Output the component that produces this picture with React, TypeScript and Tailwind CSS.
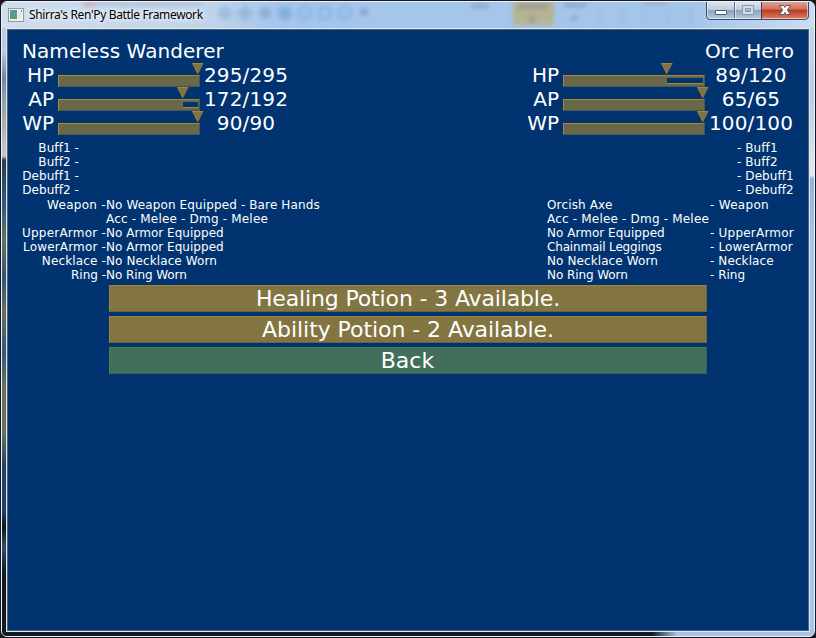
import React from "react";

type StatProps = { label: string; value: string; fill: number; left: number };

function Bar({ fill }: { fill: number }) {
  return (
    <div className="relative mt-3 h-3 w-[142px] shrink-0 border border-t-[#aa872f] border-l-[#aa872f] border-r-[#42575a] border-b-[#42575a] bg-[#69694a]">
      {fill < 138 && (
        <div
          className="absolute top-[2px] right-px h-[6px] border-b border-[#aa872f] bg-[#003370]"
          style={{ left: fill - 1 }}
        />
      )}
      <svg
        className="absolute -top-[13px] h-[12px] w-[12px]"
        style={{ left: fill - 7 }}
        viewBox="0 0 12 12"
      >
        <path d="M0 0H12L6 11.5Z" fill="#555e58" />
        <path d="M0 0H11L5.5 11Z" fill="#aa872f" />
        <path d="M1.2 1H10L5.8 9.8Z" fill="#80733f" />
      </svg>
    </div>
  );
}

function Stat({ label, value, fill, left }: StatProps) {
  return (
    <div className="flex h-6" style={{ marginLeft: left }}>
      <span className="w-[32px] text-right leading-6">{label}</span>
      <div className="ml-[4px]">
        <Bar fill={fill} />
      </div>
      <span className="w-[92px] text-center leading-6 tracking-[0.15px]">{value}</span>
    </div>
  );
}

const leftGear = [
  ["Weapon -", "No Weapon Equipped - Bare Hands", "tracking-[0.3px]", "tracking-[0.12px]"],
  ["", "Acc - Melee - Dmg - Melee", "", "tracking-[0.19px]"],
  ["UpperArmor -", "No Armor Equipped", "tracking-[0.22px]", "tracking-[0.03px]"],
  ["LowerArmor -", "No Armor Equipped", "tracking-[0.16px]", "tracking-[0.03px]"],
  ["Necklace -", "No Necklace Worn", "tracking-[0.15px]", "tracking-[0.1px]"],
  ["Ring -", "No Ring Worn", "", "tracking-[-0.08px]"],
];
const rightGear = [
  ["Orcish Axe", "- Weapon", "tracking-[0.15px]", "tracking-[0.3px]"],
  ["Acc - Melee - Dmg - Melee", "", "tracking-[0.19px]", ""],
  ["No Armor Equipped", "- UpperArmor", "tracking-[0.03px]", "tracking-[0.22px]"],
  ["Chainmail Leggings", "- LowerArmor", "tracking-[-0.17px]", "tracking-[0.16px]"],
  ["No Necklace Worn", "- Necklace", "tracking-[0.1px]", "tracking-[0.1px]"],
  ["No Ring Worn", "- Ring", "tracking-[-0.08px]", "tracking-normal"],
];
const buffs = ["Buff1", "Buff2", "Debuff1", "Debuff2"];

function Controls() {
  return (
    <svg className="absolute -top-[2px] right-[4px] h-[21px] w-[105px]" viewBox="0 0 105 21">
      <defs>
        <linearGradient id="glass" x1="0" y1="0" x2="0" y2="1">
          <stop offset="0" stopColor="#dfe8f1" />
          <stop offset=".48" stopColor="#bccbdc" />
          <stop offset=".5" stopColor="#8fa5bf" />
          <stop offset="1" stopColor="#b6cfe7" />
        </linearGradient>
        <linearGradient id="red" x1="0" y1="0" x2="0" y2="1">
          <stop offset="0" stopColor="#e7a799" />
          <stop offset=".46" stopColor="#d0705d" />
          <stop offset=".5" stopColor="#b93821" />
          <stop offset="1" stopColor="#db8061" />
        </linearGradient>
      </defs>
      <path d="M1 1H104V16Q104 20 100 20H5Q1 20 1 16Z" fill="url(#glass)" />
      <path d="M57 1H103V16Q103 19 99 19H57Z" fill="url(#red)" />
      <path d="M29.5 1V19" stroke="#5d6e84" />
      <path d="M30.5 1V19M2.500 1V16Q2.500 18.500 5 18.500H99Q102.500 18.500 102.500 16V1" stroke="#ffffff" strokeOpacity=".55" fill="none" />
      <path d="M56.500 1V19" stroke="#4c3e4c" />
      <path d="M1.500 1V16Q1.500 19.500 5 19.500H100Q103.500 19.500 103.500 16V1" fill="none" stroke="#3e4b60" />
      <rect x="10.500" y="10.500" width="11" height="4" rx=".5" fill="#fff" stroke="#555b6a" />
      <path d="M37.500 5.500H48.500V14.500H37.500ZM40.500 8.500H45.500V11.500H40.500Z" fill="#d5dee7" fillRule="evenodd" stroke="#8997a8" />
      <path d="M74.500 5.500H78.500L80 7.500L81.500 5.500H85.500L82.300 10L85.500 14.500H81.500L80 12.500L78.500 14.500H74.500L77.700 10Z" fill="#fff" stroke="#555968" />
    </svg>
  );
}

/* Blurred desktop toolbar showing through the title bar glass. */
function GlassBackdrop() {
  return (
    <svg className="absolute top-0 left-0 h-[26px] w-[812px]" viewBox="0 0 812 26">
      <defs>
        <filter id="soft" filterUnits="userSpaceOnUse" x="0" y="-10" width="812" height="50">
          <feGaussianBlur stdDeviation="2" />
        </filter>
        <linearGradient id="bar" x1="0" y1="0" x2="1" y2="0">
          <stop offset="0" stopColor="#d0deee" />
          <stop offset=".26" stopColor="#bfd3ea" />
          <stop offset=".34" stopColor="#a4c5ec" />
          <stop offset=".85" stopColor="#a4c5ec" />
          <stop offset="1" stopColor="#cbdcf0" />
        </linearGradient>
      </defs>
      <rect width="812" height="27" fill="url(#bar)" />
      <g filter="url(#soft)">
        <rect x="80" y="0" width="120" height="4" fill="#9daec8" opacity=".5" />
        <ellipse cx="88" cy="2" rx="7" ry="3" fill="#d6a0a8" opacity=".6" />
        <circle cx="223" cy="11" r="7" fill="#9dc1e2" />
        <path d="M235 11H251M243 4V19" stroke="#8fb3d8" strokeWidth="4" />
        <circle cx="263" cy="11" r="6" fill="#8db1d3" />
        <circle cx="283" cy="11" r="7" fill="#84b1da" />
        <circle cx="303" cy="11" r="6" fill="none" stroke="#86b6df" strokeWidth="3" />
        <circle cx="323" cy="11" r="6" fill="none" stroke="#86b6df" strokeWidth="3" />
        <circle cx="343" cy="11" r="6" fill="none" stroke="#86b6df" strokeWidth="3" />
        <circle cx="362" cy="10" r="4" fill="#86a5ce" />
        <path d="M469 4H487M562 3H584" stroke="#86a6cd" strokeWidth="4" />
        <rect x="511" y="-2" width="41" height="25" fill="#b5b392" />
        <path d="M516 5H546M530 13V21" stroke="#8a9290" strokeWidth="5" opacity=".6" />
        <path d="M572 13V19" stroke="#8aa8cb" strokeWidth="5" />
        <path d="M597 6V22M620 6V22M643 6V22M666 6V22M689 6V22" stroke="#9ab9dc" strokeWidth="2" />
        <path d="M640 1H665" stroke="#a795b8" strokeWidth="2" />
      </g>
    </svg>
  );
}

export default function App() {
  return (
    <div className="flex h-[638px] w-[816px] flex-col overflow-hidden bg-[#17181f] p-[1px] [font-family:'DejaVu_Sans',sans-serif] text-white">
      <div className="relative flex h-[636px] w-[814px] flex-col overflow-hidden rounded-[6px] border border-[#edf3fa] bg-[linear-gradient(90deg,#101a29_0,#101a29_650px,#a4c5ec_675px)]">
        <div className="absolute top-0 left-0 h-full w-[5px] bg-[linear-gradient(180deg,#bfd3ec_0,#b6cae5_50px,#7187aa_75px,#8f9fb5_98px,#a1a9a9_112px,#c6c9cc_154px,#293f51_158px,#345983_205px,#65745f_238px,#315477_275px,#67705c_310px,#345678_350px,#68715c_385px,#68715c_430px,#214267_465px,#1d3f69_510px,#10151d_525px,#344c6b_545px,#111923_570px)]" />
        <div className="absolute top-0 right-0 h-full w-[5px] bg-[linear-gradient(180deg,#c5d7ee_0,#b6cde9_95px,#e2e9f4_173px,#93b3dc_177px,#a4c5ec_240px)]" />
        <div className="relative flex h-[26px] shrink-0 items-center">
          <GlassBackdrop />
          <svg className="relative ml-[6px] h-[14px] w-4" viewBox="0 0 16 14">
            <defs>
              <linearGradient id="app" x1="0" y1="0" x2="0" y2="1">
                <stop stopColor="#519bb1" />
                <stop offset="1" stopColor="#5d9e61" />
              </linearGradient>
            </defs>
            <rect x=".5" y=".5" width="15" height="13" fill="#f1f1f1" stroke="#96999b" />
            <rect x="2" y="2" width="7" height="9" fill="url(#app)" />
            <rect x="10" y="3" width="3" height="8" fill="#dce7dc" />
            <rect x="13" y="2" width="1" height="2" fill="#519bb1" />
          </svg>
          <span className="relative ml-[5px] text-[12px] leading-4 tracking-[-0.35px] whitespace-nowrap text-black [font-family:'Noto_Sans',sans-serif] [text-shadow:0_0_7px_#fff,0_0_5px_#fff]">
            Shirra's Ren'Py Battle Framework
          </span>
          <Controls />
        </div>
        <main className="relative mx-[4px] h-[604px] w-[804px] shrink-0 overflow-hidden border border-[#dce7f2] bg-[#003370]">
          <div className="h-[602px] w-[802px] border border-[#52616d] pt-[9px] whitespace-nowrap">
            <div className="flex text-[20px]">
              <section className="w-[505px]">
                <h1 className="ml-[14px] leading-6 tracking-[0.06px]">Nameless Wanderer</h1>
                <Stat label="HP" value="295/295" fill={140} left={14} />
                <Stat label="AP" value="172/192" fill={125} left={14} />
                <Stat label="WP" value="90/90" fill={140} left={14} />
              </section>
              <section className="w-[295px]">
                <h1 className="mr-[14px] text-right leading-6 tracking-[0.1px]">Orc Hero</h1>
                <Stat label="HP" value="89/120" fill={104} left={14} />
                <Stat label="AP" value="65/65" fill={140} left={14} />
                <Stat label="WP" value="100/100" fill={140} left={14} />
              </section>
            </div>
            <div className="mt-[6px] flex justify-between px-[14px] text-[12px] leading-[14px] tracking-[0.08px]">
              <div className="w-[57px] text-right">
                {buffs.map((b) => <div key={b}>{b} -</div>)}
              </div>
              <div className="w-[57px]">
                {buffs.map((b) => <div key={b}>- {b}</div>)}
              </div>
            </div>
            <div className="mt-px flex px-[14px] text-[12px] leading-[14px]">
              <div className="w-[525px]">
                {leftGear.map(([slot, item, slotTracking, itemTracking], i) => (
                  <div key={i} className="flex h-[14px]">
                    <span className={`flex w-[84px] justify-end ${slotTracking}`}>{slot}</span>
                    <span className={itemTracking}>{item}</span>
                  </div>
                ))}
              </div>
              <div>
                {rightGear.map(([item, slot, itemTracking, slotTracking], i) => (
                  <div key={i} className="flex h-[14px]">
                    <span className={`w-[163px] ${itemTracking}`}>{item}</span>
                    <span className={slotTracking}>{slot}</span>
                  </div>
                ))}
              </div>
            </div>
            <div className="mt-[3px] ml-[101px] flex w-[598px] flex-col gap-1 text-[22px]">
              <button className="h-[27px] border border-t-[#a7852f] border-r-[#62683e] border-b-[#62683e] border-l-[#a7852f] bg-[#827541] leading-[25px] tracking-[-0.14px]">Healing Potion - 3 Available.</button>
              <button className="h-[27px] border border-t-[#a7852f] border-r-[#62683e] border-b-[#62683e] border-l-[#a7852f] bg-[#827541] leading-[25px] tracking-[-0.06px]">Ability Potion - 2 Available.</button>
              <button className="h-[27px] border border-t-[#4c8251] border-r-[#316363] border-b-[#316363] border-l-[#4c8251] bg-[#426f5a] pr-px leading-[25px]">Back</button>
            </div>
          </div>
        </main>
      </div>
    </div>
  );
}
